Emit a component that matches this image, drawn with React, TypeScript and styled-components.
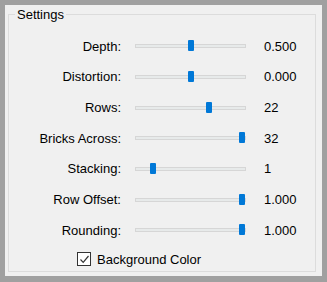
import styled, { createGlobalStyle } from "styled-components"

type Setting = {
  label: string
  value: string
  pos: number
}

const settings: Setting[] = [
  { label: "Depth:", value: "0.500", pos: 0.5 },
  { label: "Distortion:", value: "0.000", pos: 0.5 },
  { label: "Rows:", value: "22", pos: 0.68 },
  { label: "Bricks Across:", value: "32", pos: 1 },
  { label: "Stacking:", value: "1", pos: 0.14 },
  { label: "Row Offset:", value: "1.000", pos: 1 },
  { label: "Rounding:", value: "1.000", pos: 1 },
]

export default function App() {
  return (
    <>
      <GlobalStyle />
      <Frame>
        <GroupBox>
          <Legend>Settings</Legend>
          <Grid>
            {settings.map((s) => (
              <Row key={s.label}>
                <Label>{s.label}</Label>
                <Track>
                  <Thumb style={{ left: `calc((100% - 6px) * ${s.pos})` }} />
                </Track>
                <Value>{s.value}</Value>
              </Row>
            ))}
          </Grid>
          <CheckRow>
            <CheckBox>
              <svg width="11" height="11" viewBox="0 0 11 11">
                <path d="M1.5 5.5 L4.2 8.3 L9.5 2" fill="none" stroke="#333" strokeWidth="1.2" />
              </svg>
            </CheckBox>
            <span>Background Color</span>
          </CheckRow>
        </GroupBox>
      </Frame>
    </>
  )
}

const GlobalStyle = createGlobalStyle`
  body {
    margin: 0;
    font-family: "Liberation Sans", Arial, sans-serif;
    font-size: 13px;
    color: #000;
  }
`

const Frame = styled.div`
  box-sizing: border-box;
  width: 327px;
  height: 282px;
  background: #f0f0f0;
  border: 5px solid #a0a0a0;
  border-bottom-width: 6px;
  padding: 9px 6px 4px 3px;
`

const GroupBox = styled.div`
  position: relative;
  box-sizing: border-box;
  height: 100%;
  border: 1px solid #dcdcdc;
  padding-top: 16px;
`

const Legend = styled.span`
  position: absolute;
  top: -8px;
  left: 6px;
  padding: 0 2px;
  background: #f0f0f0;
  line-height: 15px;
`

const Grid = styled.div`
  display: grid;
  grid-auto-rows: 30.67px;
`

const Row = styled.div`
  display: grid;
  grid-template-columns: 112px 111px auto;
  column-gap: 14px;
  align-items: center;

  & > :last-child {
    margin-left: 4px;
  }
`

const Label = styled.span`
  text-align: right;
`

const Track = styled.div`
  position: relative;
  box-sizing: border-box;
  height: 4px;
  background: #e7eaea;
  border: 1px solid #d6d6d6;
`

const Thumb = styled.div`
  position: absolute;
  top: -5px;
  width: 6px;
  height: 11px;
  background: #0078d7;
  border-radius: 1px;
`

const Value = styled.span``

const CheckRow = styled.div`
  display: flex;
  align-items: center;
  gap: 6px;
  margin-left: 68px;
  margin-top: 6px;
`

const CheckBox = styled.div`
  box-sizing: border-box;
  width: 14px;
  height: 14px;
  border: 1px solid #333;
  background: #fff;
  display: flex;
  align-items: center;
  justify-content: center;
`
